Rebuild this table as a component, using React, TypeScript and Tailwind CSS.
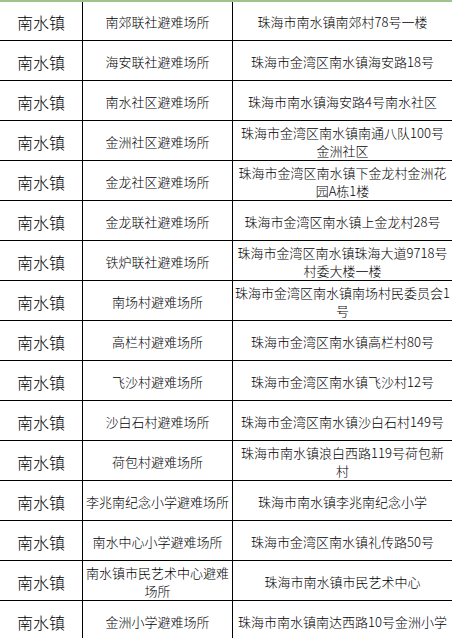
import React from "react";

const rows: [string[], string[]][] = [
  [["南郊联社避难场所"], ["珠海市南水镇南郊村78号一楼"]],
  [["海安联社避难场所"], ["珠海市金湾区南水镇海安路18号"]],
  [["南水社区避难场所"], ["珠海市南水镇海安路4号南水社区"]],
  [["金洲社区避难场所"], ["珠海市金湾区南水镇南通八队100号", "金洲社区"]],
  [["金龙社区避难场所"], ["珠海市金湾区南水镇下金龙村金洲花", "园A栋1楼"]],
  [["金龙联社避难场所"], ["珠海市金湾区南水镇上金龙村28号"]],
  [["铁炉联社避难场所"], ["珠海市金湾区南水镇珠海大道9718号", "村委大楼一楼"]],
  [["南场村避难场所"], ["珠海市金湾区南水镇南场村民委员会1", "号"]],
  [["高栏村避难场所"], ["珠海市金湾区南水镇高栏村80号"]],
  [["飞沙村避难场所"], ["珠海市金湾区南水镇飞沙村12号"]],
  [["沙白石村避难场所"], ["珠海市金湾区南水镇沙白石村149号"]],
  [["荷包村避难场所"], ["珠海市南水镇浪白西路119号荷包新", "村"]],
  [["李兆南纪念小学避难场所"], ["珠海市南水镇李兆南纪念小学"]],
  [["南水中心小学避难场所"], ["珠海市金湾区南水镇礼传路50号"]],
  [["南水镇市民艺术中心避难", "场所"], ["珠海市南水镇市民艺术中心"]],
  [["金洲小学避难场所"], ["珠海市南水镇南达西路10号金洲小学"]],
];

function Lines({ lines }: { lines: string[] }) {
  return (
    <div className="flex flex-col items-center leading-[18px] whitespace-nowrap">
      {lines.map((l, i) => (
        <span key={i}>{l}</span>
      ))}
    </div>
  );
}

export default function App() {
  return (
    <div
      className="w-[452px] h-[638px] overflow-hidden bg-white text-black font-light"
      style={{ fontFamily: '"Noto Sans CJK SC", "Liberation Sans", sans-serif' }}
    >
      {rows.map(([c2, c3], i) => (
        <div
          key={i}
          className={
            i === 0
              ? "flex h-[41px] border-t-2 border-t-[#9cc48c] border-b border-b-black"
              : "flex h-[40px] border-b border-b-black"
          }
        >
          <div className="w-[83px] shrink-0 border-r border-r-black flex items-center justify-center text-[16px] pt-[2px]">
            南水镇
          </div>
          <div className="w-[150px] shrink-0 border-r border-r-black flex items-center justify-center text-[13px] pt-[2px]">
            <Lines lines={c2} />
          </div>
          <div className="flex-1 flex items-center justify-center text-[13px] pt-[2px]">
            <Lines lines={c3} />
          </div>
        </div>
      ))}
    </div>
  );
}
